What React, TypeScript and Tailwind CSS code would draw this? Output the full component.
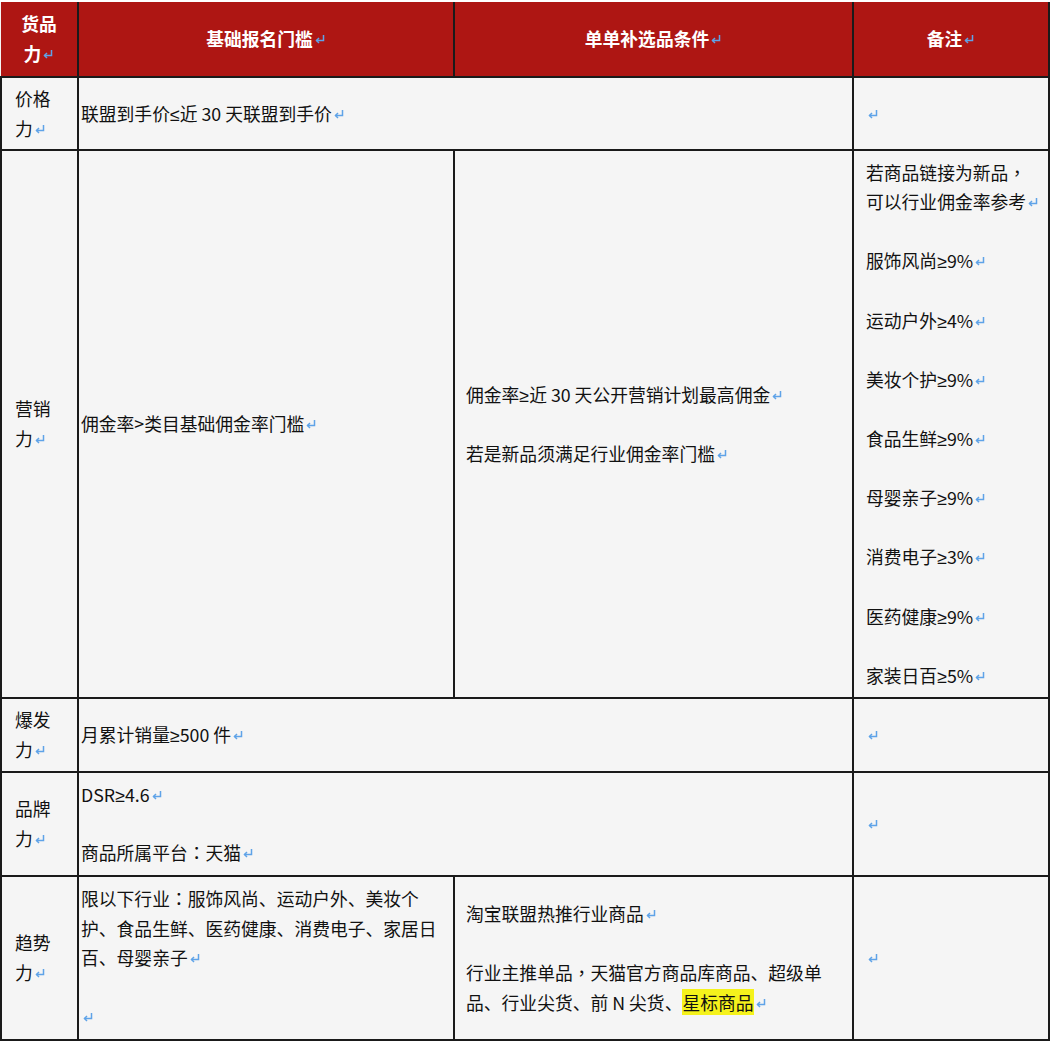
import type { ReactNode } from "react"

const RET = () => (
  <svg width="12" height="12" viewBox="0 0 12 12" className="inline-block align-[1px] ml-[1px]">
    <path d="M9.5 2 V7.5 H2.5" fill="none" stroke="#5fa3e8" strokeWidth="1.5" />
    <path d="M5 5 L2.5 7.5 L5 10" fill="none" stroke="#5fa3e8" strokeWidth="1.5" />
  </svg>
)

// narrow math signs and centred full-width punctuation
const M = ({ c }: { c: string }) => (
  <span className="leading-[0px]" style={{ fontFamily: '"Liberation Sans", "DejaVu Sans", sans-serif' }}>
    {c}
  </span>
)
const TC = ({ c }: { c: string }) => (
  <span className="leading-[0px]" style={{ fontFamily: '"Noto Sans CJK TC", sans-serif' }}>
    {c}
  </span>
)

const P = ({ children, first }: { children: ReactNode; first?: boolean }) => (
  <p className={first ? "" : "mt-[29.6px]"}>{children}</p>
)

const td = "border-2 border-[#1a1a1a] align-middle"

function Label({ a }: { a: string }) {
  return (
    <td className={`${td} pl-[13px] pr-1`}>
      <p>{a}</p>
      <p>
        力<RET />
      </p>
    </td>
  )
}

const notes = [
  ["服饰风尚", "9%"],
  ["运动户外", "4%"],
  ["美妆个护", "9%"],
  ["食品生鲜", "9%"],
  ["母婴亲子", "9%"],
  ["消费电子", "3%"],
  ["医药健康", "9%"],
  ["家装日百", "5%"],
]

export default function App() {
  return (
    <div
      className="w-[1050px] bg-white pt-[2px] text-[17.8px] leading-[29.6px] text-[#111]"
      style={{ fontFamily: '"Noto Sans CJK SC", "Noto Sans", sans-serif' }}
    >
      <table className="w-[1048px] table-fixed border-collapse bg-[#f5f5f5]">
        <colgroup>
          <col className="w-[77px]" />
          <col className="w-[376px]" />
          <col className="w-[399px]" />
          <col className="w-[196px]" />
        </colgroup>
        <tbody>
          <tr className="h-[75px] bg-[#ae1613] font-bold text-white">
            <td className="border-2 border-t-0 border-l-0 border-[#1a1a1a] text-center align-middle">
              <p>货品</p>
              <p>
                力<RET />
              </p>
            </td>
            <td className="border-2 border-t-0 border-[#1a1a1a] text-center align-middle">
              基础报名门槛<RET />
            </td>
            <td className="border-2 border-t-0 border-[#1a1a1a] text-center align-middle">
              单单补选品条件<RET />
            </td>
            <td className="border-2 border-t-0 border-[#1a1a1a] text-center align-middle">
              备注<RET />
            </td>
          </tr>

          <tr className="h-[73px]">
            <Label a="价格" />
            <td colSpan={2} className={`${td} pl-[2px]`}>
              联盟到手价<M c="≤" />近 30 天联盟到手价<RET />
            </td>
            <td className={`${td} pl-[12px]`}>
              <RET />
            </td>
          </tr>

          <tr className="h-[548px]">
            <Label a="营销" />
            <td className={`${td} pl-[2px]`}>
              佣金率&gt;类目基础佣金率门槛<RET />
            </td>
            <td className={`${td} pl-[11px]`}>
              <P first>
                佣金率<M c="≥" />近 30 天公开营销计划最高佣金<RET />
              </P>
              <P>
                若是新品须满足行业佣金率门槛<RET />
              </P>
            </td>
            <td className={`${td} pl-[12px] pr-0 whitespace-nowrap`}>
              <P first>
                若商品链接为新品<TC c="，" />
                <br />
                可以行业佣金率参考<RET />
              </P>
              {notes.map(([n, v]) => (
                <P key={n}>
                  {n}
                  <M c="≥" />
                  {v}
                  <RET />
                </P>
              ))}
            </td>
          </tr>

          <tr className="h-[74px]">
            <Label a="爆发" />
            <td colSpan={2} className={`${td} pl-[2px]`}>
              月累计销量<M c="≥" />500 件<RET />
            </td>
            <td className={`${td} pl-[12px]`}>
              <RET />
            </td>
          </tr>

          <tr className="h-[104px]">
            <Label a="品牌" />
            <td colSpan={2} className={`${td} pl-[2px]`}>
              <p>
                DSR<M c="≥" />4.6<RET />
              </p>
              <p className="mt-[28px]">
                商品所属平台<TC c="：" />天猫<RET />
              </p>
            </td>
            <td className={`${td} pl-[12px]`}>
              <RET />
            </td>
          </tr>

          <tr className="h-[164px]">
            <Label a="趋势" />
            <td className={`${td} pl-[2px] whitespace-nowrap`}>
              <P first>
                限以下行业<TC c="：" />服饰风尚、运动户外、美妆个
                <br />
                护、食品生鲜、医药健康、消费电子、家居日
                <br />
                百、母婴亲子<RET />
              </P>
              <P>
                <RET />
              </P>
            </td>
            <td className={`${td} pl-[11px] whitespace-nowrap`}>
              <P first>
                淘宝联盟热推行业商品<RET />
              </P>
              <P>
                行业主推单品<TC c="，" />天猫官方商品库商品、超级单
                <br />
                品、行业尖货、前 N 尖货、
                <span className="bg-[#f5f21c]">星标商品</span>
                <RET />
              </P>
            </td>
            <td className={`${td} pl-[12px]`}>
              <RET />
            </td>
          </tr>
        </tbody>
      </table>
    </div>
  )
}
